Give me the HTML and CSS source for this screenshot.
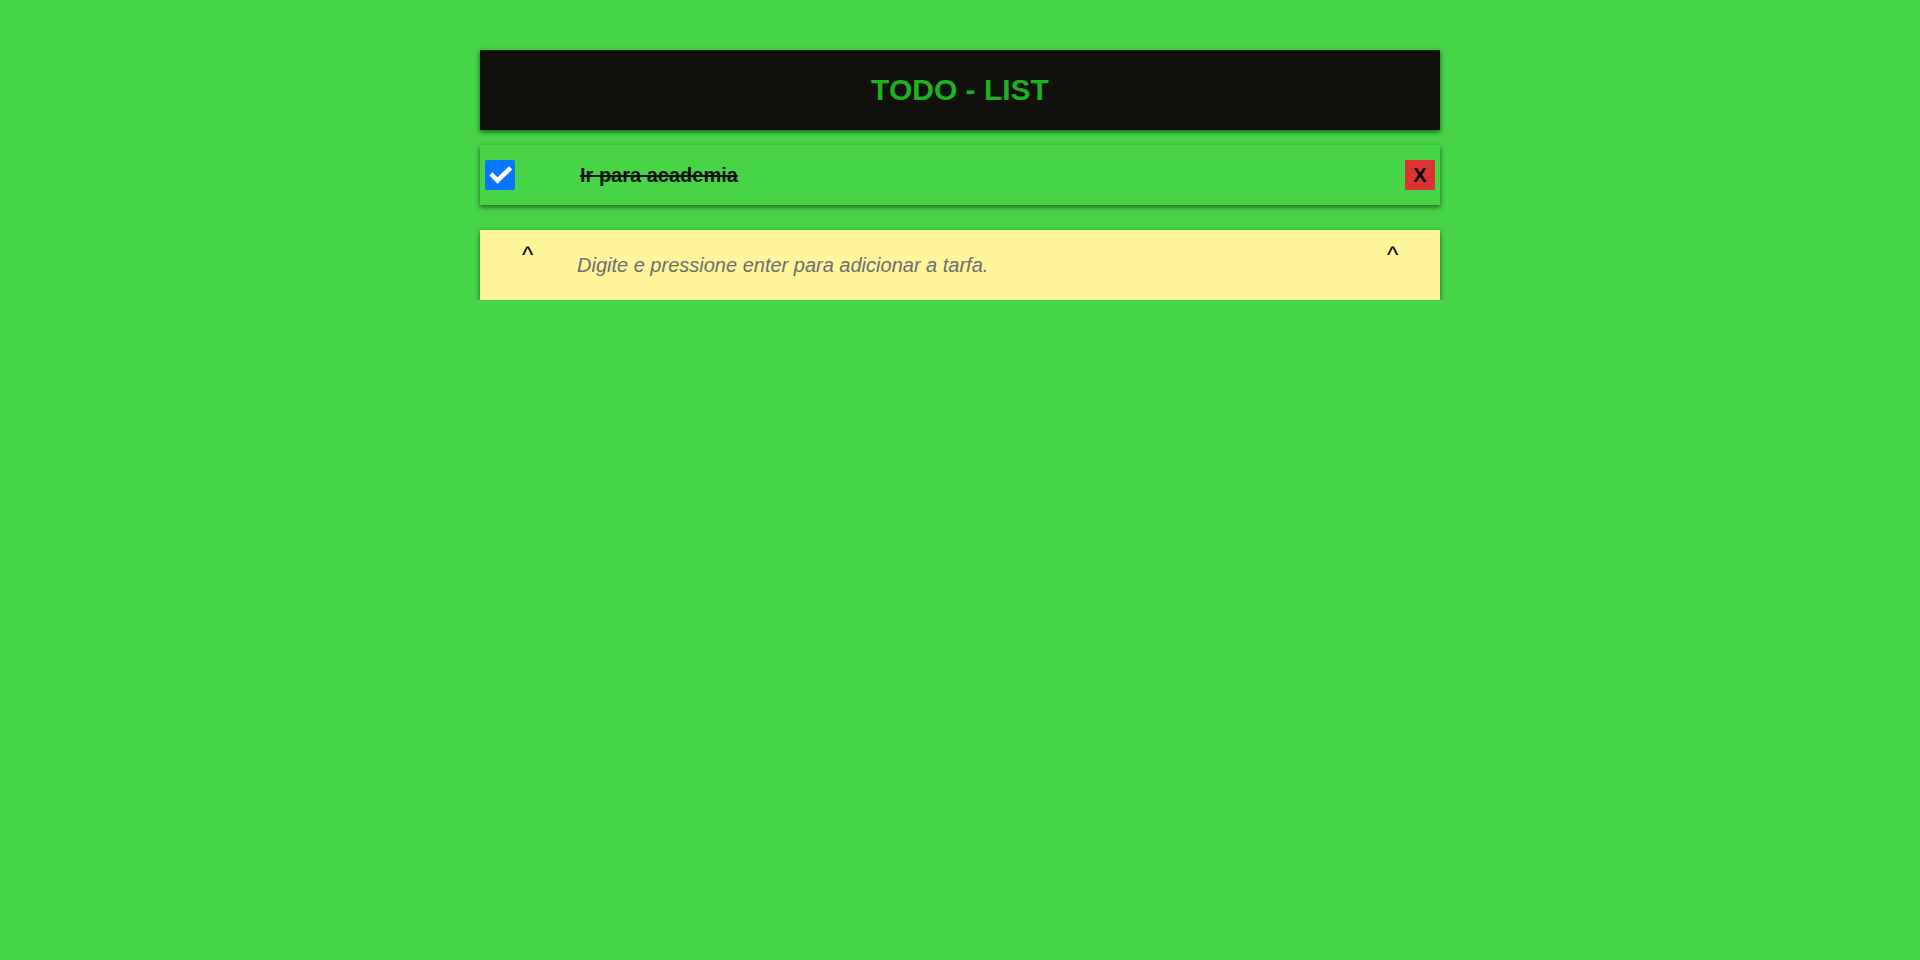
FILE: index.html
```html
<!DOCTYPE html>
<html lang="pt">
<head>
<meta charset="utf-8">
<title>Todo List</title>
<link rel="stylesheet" href="styles.css">
</head>
<body>
<div class="app">
  <header class="header"><h1 class="title">TODO - LIST</h1></header>
  <ul class="list">
    <li class="item">
      <span class="check"><svg viewBox="0 0 30 30" width="30" height="30"><rect width="30" height="30" rx="2" fill="#0a75ff"/><path d="M7.5 15.5 L12.5 20.5 L24 9.5" fill="none" stroke="#fff" stroke-width="4.5" stroke-linecap="square" stroke-linejoin="miter"/></svg></span>
      <span class="text done">Ir para academia</span>
      <button class="del">X</button>
    </li>
  </ul>
  <div class="new">
    <span class="caret">^</span>
    <span class="placeholder">Digite e pressione enter para adicionar a tarfa.</span>
    <span class="caret caret-r">^</span>
  </div>
</div>
</body>
</html>
```
FILE: styles.css
```css
html, body {
  margin: 0;
  padding: 0;
  background: #47d447;
  font-family: "Liberation Sans", Arial, sans-serif;
}
.app {
  width: 960px;
  margin: 0 auto;
  padding-top: 50px;
}
.header {
  height: 80px;
  background: #10100c;
  display: flex;
  align-items: center;
  justify-content: center;
  box-shadow: 0 2px 5px rgba(0,0,0,0.55);
}
.title {
  margin: 0;
  color: #1fb21f;
  font-size: 30px;
  font-weight: bold;
}
.list {
  list-style: none;
  margin: 15px 0 0;
  padding: 0;
}
.item {
  height: 60px;
  display: flex;
  align-items: center;
  padding: 0 5px;
  background: #47d447;
  box-shadow: 0 2px 5px rgba(0,0,0,0.55);
}
.check {
  width: 30px;
  height: 30px;
  display: block;
}
.check svg { display: block; }
.text {
  margin-left: 65px;
  font-size: 20px;
  font-weight: bold;
  color: #111;
  flex: 1;
}
.done { text-decoration: line-through; }
.del {
  width: 30px;
  height: 30px;
  border: none;
  padding: 0;
  background: #dc3232;
  color: #000;
  font-family: "Liberation Sans", Arial, sans-serif;
  font-weight: bold;
  font-size: 20px;
}
.new {
  margin-top: 25px;
  height: 70px;
  background: #fff59b;
  box-shadow: 0 2px 5px rgba(0,0,0,0.55);
  display: flex;
  align-items: flex-start;
  padding-left: 42px;
}
.caret {
  font-size: 24px;
  margin-top: 11px;
  color: #000;
  width: 13px;
}
.placeholder {
  margin-left: 42px;
  margin-top: 24px;
  font-size: 20px;
  font-style: italic;
  color: #6e6e6e;
  flex: 1;
}
.caret-r {
  margin-right: 40px;
}
```
